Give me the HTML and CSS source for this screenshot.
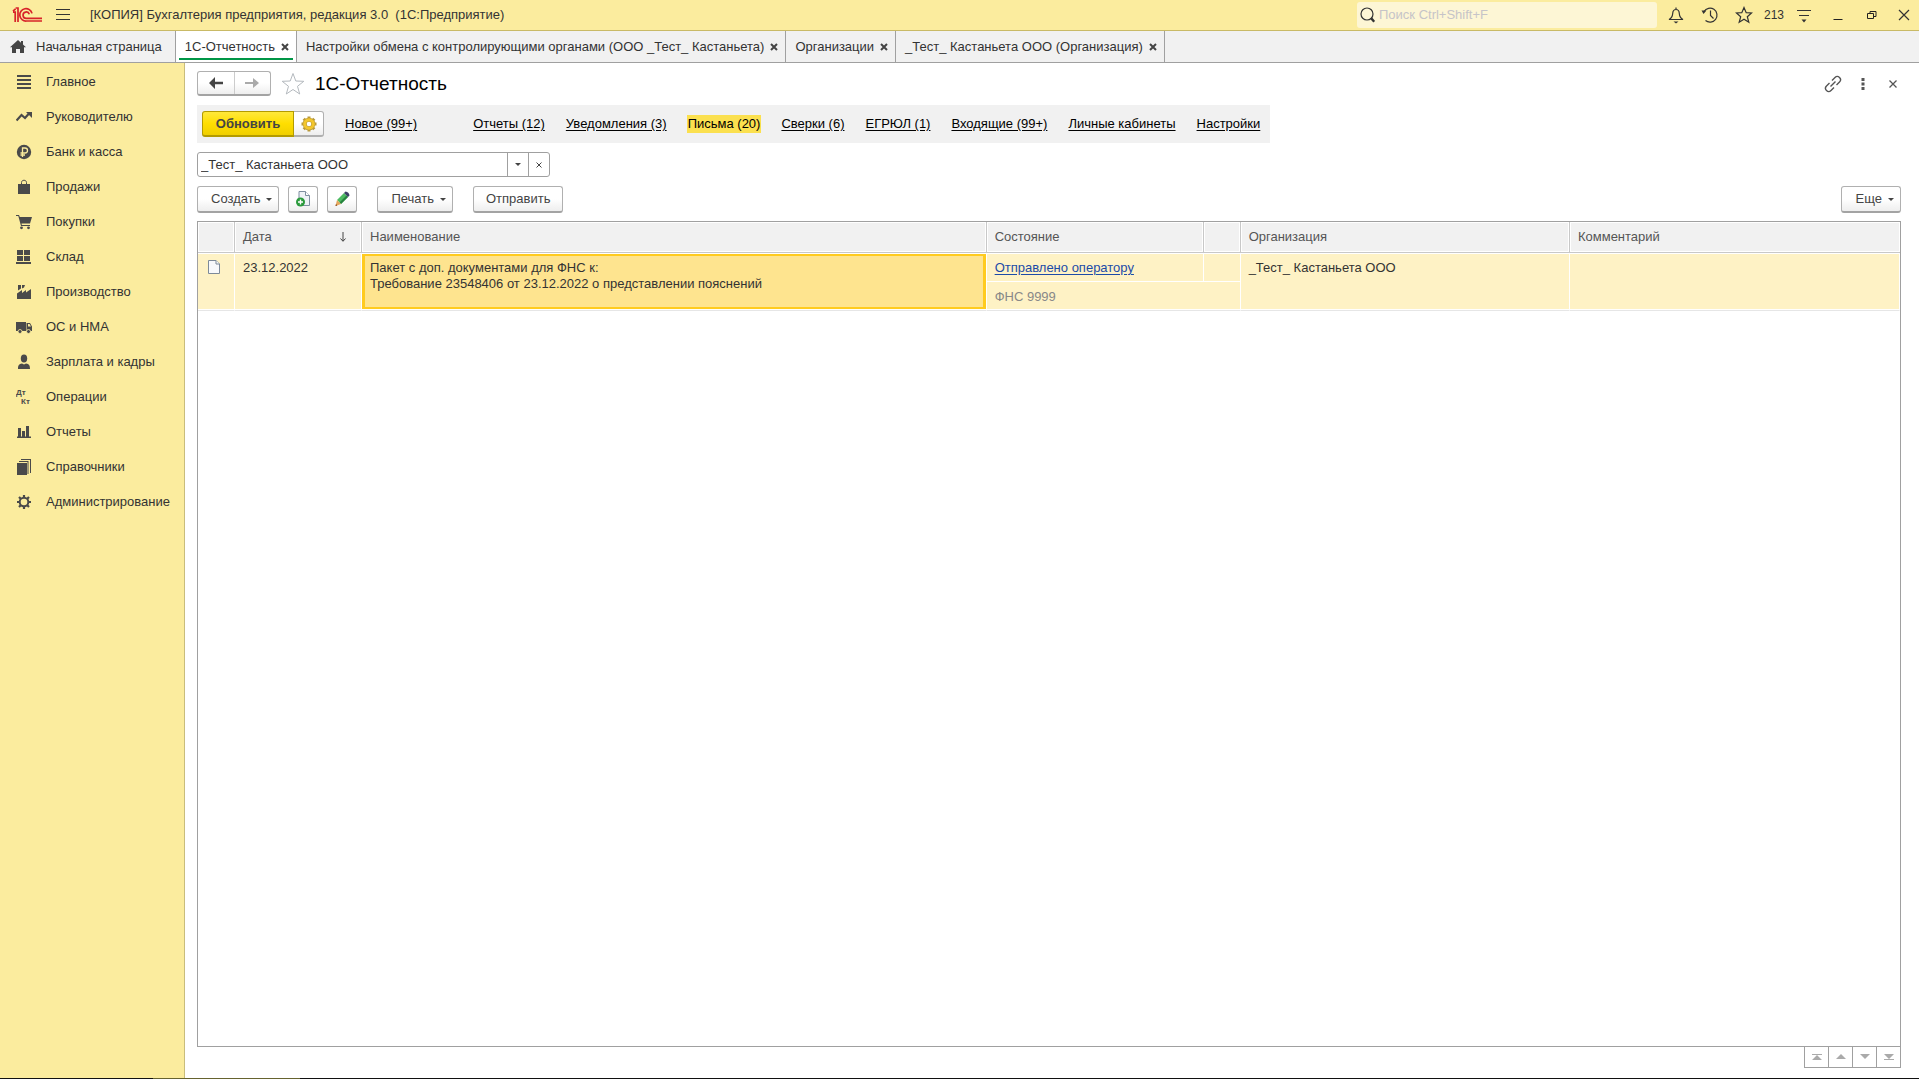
FILE: index.html
```html
<!DOCTYPE html>
<html lang="ru">
<head>
<meta charset="utf-8">
<title>1С-Отчетность</title>
<link rel="stylesheet" href="styles.css">
</head>
<body>
<header class="titlebar">
  <svg class="logo" width="30" height="16" viewBox="0 0 30 16" fill="none" stroke="#d8232a" stroke-width="1.7"><path d="M1 4.2 3.6 1.8M1 5.2h2.2V15M3.6 1H6V15"/><path d="M20 6.4A6.2 6.2 0 1 0 14.5 14H30"/><path d="M17.3 7.2a3.2 3.2 0 1 0-3 4.2H30"/></svg>
  <button class="plain menu" aria-label="Меню"><svg width="16" height="16" viewBox="0 0 16 16" stroke="#333" ><path d="M1 2.5h14M1 7.5h14M1 12.5h14"/></svg></button>
  <span class="app-name">[КОПИЯ] Бухгалтерия предприятия, редакция 3.0&nbsp; (1С:Предприятие)</span>
  <label class="search">
    <svg width="18" height="18" viewBox="0 0 18 18" fill="none" stroke="#333"><circle cx="8" cy="8" r="6" stroke-width="1.2"/><path d="m12.2 12.2 3 3.6" stroke-width="2.4"/></svg>
    <input type="text" placeholder="Поиск Ctrl+Shift+F" aria-label="Поиск">
  </label>
  <nav class="tools">
    <button class="plain" aria-label="Уведомления"><svg width="18" height="18" viewBox="0 0 18 18" fill="none" stroke="#333" stroke-width="1.2"><path d="M2 13.500c2-1 3.500-3 3.700-6 .1-2.500 1.300-4 3.300-4s3.200 1.500 3.300 4c.2 3 1.700 5 3.700 6zM9 3.500V1.500"/><path d="M6.500 15.500h5L9 17.500z" fill="#333" stroke="none"/></svg></button>
    <button class="plain" aria-label="История"><svg width="18" height="18" viewBox="0 0 18 18" fill="none" stroke="#333" stroke-width="1.2"><path d="M3 5.500A7 7 0 1 1 4.500 14.500M9.500 4.500V9.500l3 3"/><path d="M.5 4.500h5L2.500 8z" fill="#333" stroke="none"/></svg></button>
    <button class="plain" aria-label="Избранное"><svg width="18" height="18" viewBox="0 0 18 18" fill="none" stroke="#333" stroke-width="1.2"><path d="m9 1.500 2.200 5.200 5.300.3-4.200 3.700 1.500 5.600L9 13.300l-4.800 3 1.500-5.600L1.500 7l5.300-.3z"/></svg></button>
    <span class="count">213</span>
    <button class="plain" aria-label="Настройка панели"><svg width="18" height="18" viewBox="0 0 18 18" stroke="#333" stroke-width="1.2"><path d="M2 4.500h14M4 9.500h10"/><path d="M6.500 13.500h5L9 16.500z" fill="#333" stroke="none"/></svg></button>
    <button class="plain" aria-label="Свернуть"><svg width="10" height="12" viewBox="0 0 10 12" stroke="#222"><path d="M.5 10.500h9"/></svg></button>
    <button class="plain" aria-label="Развернуть"><svg width="10" height="12" viewBox="0 0 10 12" fill="none" stroke="#222"><path d="M.5 4.500h6v5h-6zM3 4.500V2.500h6v5H6.500"/></svg></button>
    <button class="plain" aria-label="Закрыть"><svg width="12" height="12" viewBox="0 0 12 12" stroke="#333" stroke-width="1.2"><path d="m1 1 10 10M11 1 1 11"/></svg></button>
  </nav>
</header>

<nav class="tabs">
  <a class="tab home" href="#"><svg width="16" height="14" viewBox="0 0 16 14" fill="#444"><path d="M8 0 0 7.300h2V13h4V9h4v4h4V7.300h2L13 4.500V1h-2v1.700z"/></svg>Начальная страница</a>
  <div class="tab active"><a href="#">1С-Отчетность</a><button class="plain" aria-label="Закрыть"><svg width="8" height="8" viewBox="0 0 8 8" stroke="#444" stroke-width="2"><path d="m1 1 6 6M7 1 1 7"/></svg></button></div>
  <div class="tab"><a href="#">Настройки обмена с контролирующими органами (ООО _Тест_ Кастаньета)</a><button class="plain" aria-label="Закрыть"><svg width="8" height="8" viewBox="0 0 8 8" stroke="#444" stroke-width="2"><path d="m1 1 6 6M7 1 1 7"/></svg></button></div>
  <div class="tab"><a href="#">Организации</a><button class="plain" aria-label="Закрыть"><svg width="8" height="8" viewBox="0 0 8 8" stroke="#444" stroke-width="2"><path d="m1 1 6 6M7 1 1 7"/></svg></button></div>
  <div class="tab"><a href="#">_Тест_ Кастаньета ООО (Организация)</a><button class="plain" aria-label="Закрыть"><svg width="8" height="8" viewBox="0 0 8 8" stroke="#444" stroke-width="2"><path d="m1 1 6 6M7 1 1 7"/></svg></button></div>
</nav>

<div class="body">
  <nav class="sidebar">
    <a href="#"><svg viewBox="0 0 16 16"><path d="M1 1h14v2H1zM1 5h14v2H1zM1 9h14v2H1zM1 13h14v2H1z"/></svg>Главное</a>
    <a href="#"><svg viewBox="0 0 16 16"><path d="m.5 11.500 5-5.500 3.500 3 4-4.500" fill="none" stroke="#4a4a4a" stroke-width="2.2"/><path d="M10 3h6v6z"/></svg>Руководителю</a>
    <a href="#"><svg viewBox="0 0 16 16"><circle cx="8" cy="8" r="7.2"/><path d="M6.500 13V4H9a2.300 2.300 0 0 1 0 5H4.500M4.500 11H9" fill="none" stroke="#fbec9e" stroke-width="1.3"/></svg>Банк и касса</a>
    <a href="#"><svg viewBox="0 0 16 16"><path d="M2 5h3v2h1V5h4v2h1V5h3v10H2z"/><path d="M5.500 7V3.500C5.500.5 10.500.5 10.500 3.500V7" fill="none" stroke="#4a4a4a"/></svg>Продажи</a>
    <a href="#"><svg viewBox="0 0 16 16"><path d="M0 1h3l.8 2H16l-2 6.500H5.500l.3 1.500H14v1H5L2.300 2H0z"/><circle cx="5.5" cy="13.8" r="1.4"/><circle cx="12.5" cy="13.8" r="1.4"/></svg>Покупки</a>
    <a href="#"><svg viewBox="0 0 16 16"><path d="M1 1h6v5H1zM8 1h6v5H8zM1 7h6v5H1zM8 7h6v5H8zM0 13h15v2H0z"/></svg>Склад</a>
    <a href="#"><svg viewBox="0 0 16 16"><path d="M1 9.500 6 6v3l4-3v2.500L15 5v10H1zM2 1h3v3.500L2 6.500zM6 1h3l-1 2.500L6 4.500z"/></svg>Производство</a>
    <a href="#"><svg viewBox="0 0 16 16"><path fill-rule="evenodd" d="M0 3h10v9H0zM10.500 4H14l2 3.500V12h-5.500zM12 5v2.500h3L13.500 5z"/><circle cx="4" cy="12.5" r="2" stroke="#fbec9e" stroke-width=".8"/><circle cx="12.5" cy="12.5" r="2" stroke="#fbec9e" stroke-width=".8"/></svg>ОС и НМА</a>
    <a href="#"><svg viewBox="0 0 16 16"><ellipse cx="8" cy="4.5" rx="3.2" ry="4"/><path d="M2 15c0-4 1-5 4-5.500l2 1 2-1c3 .5 4 1.500 4 5.500z"/></svg>Зарплата и кадры</a>
    <a href="#"><svg class="dtkt" viewBox="0 0 16 16"><text x="0" y="6">Дт</text><text x="5" y="15">Кт</text></svg>Операции</a>
    <a href="#"><svg viewBox="0 0 16 16"><path d="M1 12.500h14V14H1zM2 4h3v9H2zM6 7h3v6H6zM10 2h3v11h-3z"/></svg>Отчеты</a>
    <a href="#"><svg viewBox="0 0 16 16"><path d="M1 4h10v12H1zM3 2h9.500v13h-1V3H3zM5 0h10v14h-1V1H5z"/></svg>Справочники</a>
    <a href="#"><svg viewBox="0 0 16 16" fill="none" stroke="#4a4a4a"><circle cx="8" cy="8" r="4.3" stroke-width="2"/><path d="M8 1v2.500M8 12.500V15M1 8h2.500M12.500 8H15M3 3l2 2M11 11l2 2M13 3l-2 2M5 11l-2 2" stroke-width="2.2"/></svg>Администрирование</a>
  </nav>

  <main class="content">
    <div class="page-head">
      <div class="history">
        <button aria-label="Назад"><svg width="16" height="12" viewBox="0 0 16 12" fill="#444"><path d="M7 0v4.800h8v2.400H7V12L1 6z"/></svg></button>
        <button aria-label="Вперед"><svg width="16" height="12" viewBox="0 0 16 12" fill="#aaa"><path d="M9 1v4H1v2h8v4l6-5z"/></svg></button>
      </div>
      <button class="plain" aria-label="В избранное"><svg width="24" height="24" viewBox="0 0 24 24" fill="#fff" stroke="#b4b9be"><path d="m12 1.500 2.800 7.500 8 .3-6.300 5 2.200 7.700-6.700-4.500-6.700 4.500 2.200-7.700-6.300-5 8-.3z"/></svg></button>
      <h1>1С-Отчетность</h1>
      <div class="page-tools">
        <button class="plain" aria-label="Ссылка"><svg width="18" height="18" viewBox="0 0 18 18" fill="none" stroke="#555" stroke-width="1.4"><path d="m8 5.500 3-3a3 3 0 0 1 4.500 4.500l-3 3M10 12.500l-3 3A3 3 0 0 1 2.500 11l3-3M6.500 11.500l5-5"/></svg></button>
        <button class="plain" aria-label="Еще"><svg width="4" height="12" viewBox="0 0 4 12" fill="#555"><path d="M.5 0h3v3h-3zM.5 4.500h3v3h-3zM.5 9h3v3h-3z"/></svg></button>
        <button class="plain" aria-label="Закрыть"><svg width="8" height="8" viewBox="0 0 8 8" stroke="#555" stroke-width="1.3"><path d="m.5.5 7 7M7.500.5l-7 7"/></svg></button>
      </div>
    </div>

    <nav class="sections">
      <div class="refresh">
        <button class="primary">Обновить</button>
        <button class="gear" aria-label="Настройка обновления"><svg width="16" height="16" viewBox="0 0 16 16" fill="none" stroke="#b99a3a"><path d="M8 .5v3M8 12.500v3M.5 8h3M12.500 8h3M2.700 2.700l2 2M11.300 11.300l2 2M13.300 2.700l-2 2M4.700 11.300l-2 2" stroke-width="3"/><circle cx="8" cy="8" r="4.3" stroke-width="4"/><circle cx="8" cy="8" r="4.3" stroke="#f3c62c" stroke-width="3"/></svg></button>
      </div>
      <a class="lead" href="#">Новое (99+)</a>
      <a href="#">Отчеты (12)</a>
      <a href="#">Уведомления (3)</a>
      <a class="current" href="#">Письма (20)</a>
      <a href="#">Сверки (6)</a>
      <a href="#">ЕГРЮЛ (1)</a>
      <a href="#">Входящие (99+)</a>
      <a href="#">Личные кабинеты</a>
      <a href="#">Настройки</a>
    </nav>

    <div class="combo">
      <input type="text" value="_Тест_ Кастаньета ООО" aria-label="Организация">
      <button aria-label="Выбрать"><span class="caret"></span></button>
      <button aria-label="Очистить"><svg width="6" height="6" viewBox="0 0 6 6" stroke="#444"><path d="m.5.5 5 5M5.500.5l-5 5"/></svg></button>
    </div>

    <div class="commands">
      <button class="btn">Создать<span class="caret"></span></button>
      <button class="btn square" aria-label="Скопировать"><svg width="16" height="16" viewBox="0 0 16 16"><path d="M4 .5h6.500L14.500 4.500v10H4z" fill="#eef2f7" stroke="#7e8ea0"/><path d="M10.500.5v4h4" fill="#fff" stroke="#7e8ea0"/><circle cx="5.5" cy="11" r="4.5" fill="#2a9a3c"/><path d="M5.500 8.500v5M3 11h5" stroke="#fff" stroke-width="1.4"/></svg></button>
      <button class="btn square" aria-label="Изменить"><svg width="16" height="16" viewBox="0 0 16 16"><path d="m3 9 7-7 4 4-7 7z" fill="#4dbb62"/><path d="m5.500 11.500 7-7L14 6l-7 7z" fill="#27823f"/><path d="m10 2 1.500-1.500q3.500.5 4 4L14 6z" fill="#3c3f66"/><path d="m3 9 4 4-5.500 2z" fill="#e5a55c"/><path d="m2 13 1.300 1.400-1.800.6z" fill="#7a3b18"/></svg></button>
      <button class="btn print">Печать<span class="caret"></span></button>
      <button class="btn send">Отправить</button>
      <button class="btn more">Еще<span class="caret"></span></button>
    </div>

    <div class="list">
      <table>
        <colgroup><col class="c-icon"><col class="c-date"><col class="c-name"><col class="c-state"><col class="c-flag"><col class="c-org"><col></colgroup>
        <thead>
          <tr><th></th><th><span class="sorted">Дата<svg width="8" height="10" viewBox="0 0 8 10" fill="none" stroke="#444"><path d="M4 0v9M1.500 6.500 4 9.300l2.500-2.800"/></svg></span></th><th>Наименование</th><th>Состояние</th><th></th><th>Организация</th><th>Комментарий</th></tr>
        </thead>
        <tbody>
          <tr>
            <td rowspan="2" class="doc"><svg width="12" height="14" viewBox="0 0 12 14" fill="#f8f9fb" stroke="#7d8a99"><path d="M.5.5H8L11.500 4v9.500H.5z"/><path d="M8 .5V4h3.500"/></svg></td>
            <td rowspan="2">23.12.2022</td>
            <td rowspan="2" class="selected">Пакет с доп. документами для ФНС к:<br>Требование 23548406 от 23.12.2022 о представлении пояснений</td>
            <td class="upper"><a href="#">Отправлено оператору</a></td>
            <td class="upper"></td>
            <td rowspan="2">_Тест_ Кастаньета ООО</td>
            <td rowspan="2"></td>
          </tr>
          <tr><td colspan="2" class="note">ФНС 9999</td></tr>
        </tbody>
      </table>
    </div>
    <div class="pager">
      <button aria-label="В начало"><svg width="10" height="6" viewBox="0 0 10 6" fill="#aaa"><path d="M0 0h10v1H0zM5 1l5 5H0z"/></svg></button>
      <button aria-label="Вверх"><svg width="10" height="6" viewBox="0 0 10 6" fill="#aaa"><path d="m5 0 5 5H0z"/></svg></button>
      <button aria-label="Вниз"><svg width="10" height="6" viewBox="0 0 10 6" fill="#aaa"><path d="m5 5 5-5H0z"/></svg></button>
      <button aria-label="В конец"><svg width="10" height="6" viewBox="0 0 10 6" fill="#aaa"><path d="M0 5h10v1H0zM5 5l5-5H0z"/></svg></button>
    </div>
  </main>
</div>
<footer class="edge"></footer>
</body>
</html>
```
FILE: styles.css
```css
* { box-sizing: border-box; }
body {
  margin: 0;
  min-height: 100vh;
  display: flex;
  flex-direction: column;
  font: 13px/16px "Liberation Sans", Arial, sans-serif;
  color: #333;
  background: #fff;
}
button, input { font: inherit; color: inherit; }
a { color: inherit; text-decoration: none; }
svg { display: block; flex: none; }
.plain {
  display: flex;
  align-items: center;
  justify-content: center;
  padding: 0;
  border: 0;
  background: none;
}

/* Title bar */
.titlebar {
  display: flex;
  align-items: center;
  height: 31px;
  padding-left: 12px;
  background: #fbec9e;
  border-bottom: 1px solid #c9ba66;
}
.menu { margin-left: 13px; }
.app-name { margin-left: 19px; white-space: nowrap; }
.search {
  display: flex;
  align-items: center;
  width: 300px;
  height: 26px;
  margin-left: auto;
  padding-left: 2px;
  background: #fdf6d5;
  border-radius: 3px;
}
.search input {
  flex: 1;
  min-width: 0;
  padding: 0 2px;
  border: 0;
  outline: 0;
  background: none;
}
.search input::placeholder { color: #c6c4c8; }
.tools { display: flex; align-items: center; }
.tools .plain { width: 34px; height: 26px; }
.tools .count { width: 26px; text-align: center; font-size: 12px; }
.tools .plain:first-child { margin-left: 2px; }
.tools .plain:last-child { width: 30px; }

/* Open windows */
.tabs {
  display: flex;
  height: 32px;
  background: #f1f1f1;
  border-bottom: 1px solid #a0a0a0;
}
.tab {
  display: flex;
  align-items: center;
  gap: 6px;
  padding: 0 7px 0 9px;
  border-right: 1px solid #a0a0a0;
  white-space: nowrap;
}
.tab.home { gap: 10px; padding: 0 13px 0 10px; }
.tab.active {
  background: linear-gradient(#009646, #009646) center bottom 2px / calc(100% - 6px) 2px no-repeat #fff;
}

.body { display: flex; flex: 1; }

/* Main sections */
.sidebar {
  width: 185px;
  flex: none;
  padding-top: 1px;
  background: #fbec9e;
  border-right: 1px solid #c9bd7c;
}
.sidebar a {
  display: flex;
  align-items: center;
  gap: 14px;
  height: 35px;
  padding-left: 16px;
  white-space: nowrap;
}
.sidebar svg { width: 16px; height: 16px; fill: #4a4a4a; }
.sidebar svg[fill="none"] { fill: none; }
.dtkt { font-size: 8px; font-weight: bold; }

.content {
  flex: 1;
  min-width: 0;
  display: flex;
  flex-direction: column;
  padding: 8px 18px 10px 12px;
}
.page-head { display: flex; align-items: center; gap: 10px; height: 25px; }
.history {
  display: flex;
  width: 74px;
  height: 25px;
  border: 1px solid #b0b0b0;
  border-bottom: 2px solid #a3a3a3;
  border-radius: 3px;
  background: linear-gradient(#fff 50%, #eee);
}
.history button {
  display: flex;
  flex: 1;
  align-items: center;
  justify-content: center;
  padding: 0;
  border: 0;
  background: none;
}
.history button + button { border-left: 1px solid #ccc; }
h1 { margin: 0; font-size: 19px; font-weight: normal; line-height: 24px; color: #000; }
.page-tools { display: flex; margin-left: auto; margin-right: -7px; }
.page-tools .plain { width: 30px; height: 24px; }

/* Reporting sections */
.sections {
  display: flex;
  align-items: center;
  align-self: flex-start;
  gap: 21px;
  height: 38px;
  margin-top: 9px;
  padding: 0 10px 0 5px;
  background: #f1f1f1;
  color: #000;
  white-space: nowrap;
}
.sections a { text-decoration: underline; text-underline-offset: 2px; }
.sections .lead { margin-right: 35px; }
.sections .current {
  margin: 0 -1px;
  padding: 1px;
  background: #fbe04f;
  text-decoration: none;
}
.refresh { display: flex; height: 26px; }
.primary {
  width: 92px;
  padding: 0;
  font-weight: bold;
  color: #444;
  border: 1px solid #b39b00;
  border-bottom-width: 2px;
  border-radius: 3px 0 0 3px;
  background: linear-gradient(#ffe83c, #ffde00 50%, #f0cf00);
}
.gear {
  display: flex;
  align-items: center;
  justify-content: center;
  width: 30px;
  padding: 0;
  border: 1px solid #b0b0b0;
  border-left: 0;
  border-bottom-width: 2px;
  border-radius: 0 3px 3px 0;
  background: linear-gradient(#fff 50%, #eee);
}

.combo {
  display: flex;
  width: 353px;
  height: 25px;
  margin-top: 9px;
  border: 1px solid #a0a0a0;
  border-radius: 3px;
}
.combo input {
  flex: 1;
  min-width: 0;
  padding: 0 3px;
  border: 0;
  outline: 0;
  background: none;
}
.combo button {
  display: flex;
  align-items: center;
  justify-content: center;
  width: 21px;
  padding: 0;
  border: 0;
  border-left: 1px solid #a0a0a0;
  background: none;
}
.caret {
  border: 3px solid transparent;
  border-top-color: #444;
  border-bottom: 0;
}

/* Commands */
.commands { display: flex; gap: 9px; margin-top: 9px; }
.btn {
  display: flex;
  align-items: center;
  justify-content: center;
  gap: 6px;
  height: 27px;
  padding: 0 6px 0 13px;
  color: #444;
  border: 1px solid #b0b0b0;
  border-bottom: 2px solid #a3a3a3;
  border-radius: 3px;
  background: linear-gradient(#fff 50%, #eee);
}
.btn.square { width: 30px; padding: 0; }
.btn.print { margin-left: 11px; }
.btn.send { margin-left: 11px; padding: 0 12px; }
.btn.more { margin-left: auto; padding-left: 14px; }

/* Letters list */
.list {
  flex: 1;
  margin-top: 8px;
  border: 1px solid #a0a0a0;
}
table {
  width: 100%;
  table-layout: fixed;
  border-collapse: separate;
  border-spacing: 0;
}
.c-icon { width: 37px; }
.c-date { width: 127px; }
.c-name { width: 36.7%; }
.c-state { width: 217px; }
.c-flag { width: 37px; }
.c-org { width: 19.35%; }
th {
  height: 31px;
  padding: 0 8px;
  text-align: left;
  font-weight: normal;
  color: #555;
  background: #f1f1f1;
  border-right: 1px solid #c8c8c8;
  border-bottom: 1px solid #c8c8c8;
  box-shadow: inset 0 0 0 1px #fff;
}
th:last-child { border-right: 0; }
.sorted { display: flex; align-items: center; justify-content: space-between; padding-right: 6px; }
td {
  height: 29px;
  padding: 7px 8px 5px;
  vertical-align: top;
  background: #fef2c5;
  border-right: 1px solid #fff;
}
td[rowspan] { border-bottom: 1px solid #e6e6e6; box-shadow: inset 0 1px #fff, inset 0 -1px #fff; }
td.upper { border-bottom: 1px solid #fff; box-shadow: inset 0 1px #fff; }
td.upper a { color: #1c4ba8; text-decoration: underline; text-underline-offset: 2px; }
td.note { color: #888; border-bottom: 1px solid #e6e6e6; box-shadow: inset 0 -1px #fff; }
td.doc { padding: 7px 10px; }
td.selected {
  background: #fee48f;
  box-shadow: inset 0 1px #fff, inset 0 -1px #fff, inset 0 0 0 3px #ffcb1f;
}

.pager {
  display: flex;
  align-self: flex-end;
  height: 21px;
  border-left: 1px solid #a0a0a0;
}
.pager button {
  display: flex;
  align-items: center;
  justify-content: center;
  width: 24px;
  padding: 0;
  border: 1px solid #a0a0a0;
  border-width: 0 1px 1px 0;
  background: #fff;
}

.edge {
  height: 1px;
  background: linear-gradient(90deg, #111 153px, #66632f 153px, #66632f 300px, #111 300px);
}
```
